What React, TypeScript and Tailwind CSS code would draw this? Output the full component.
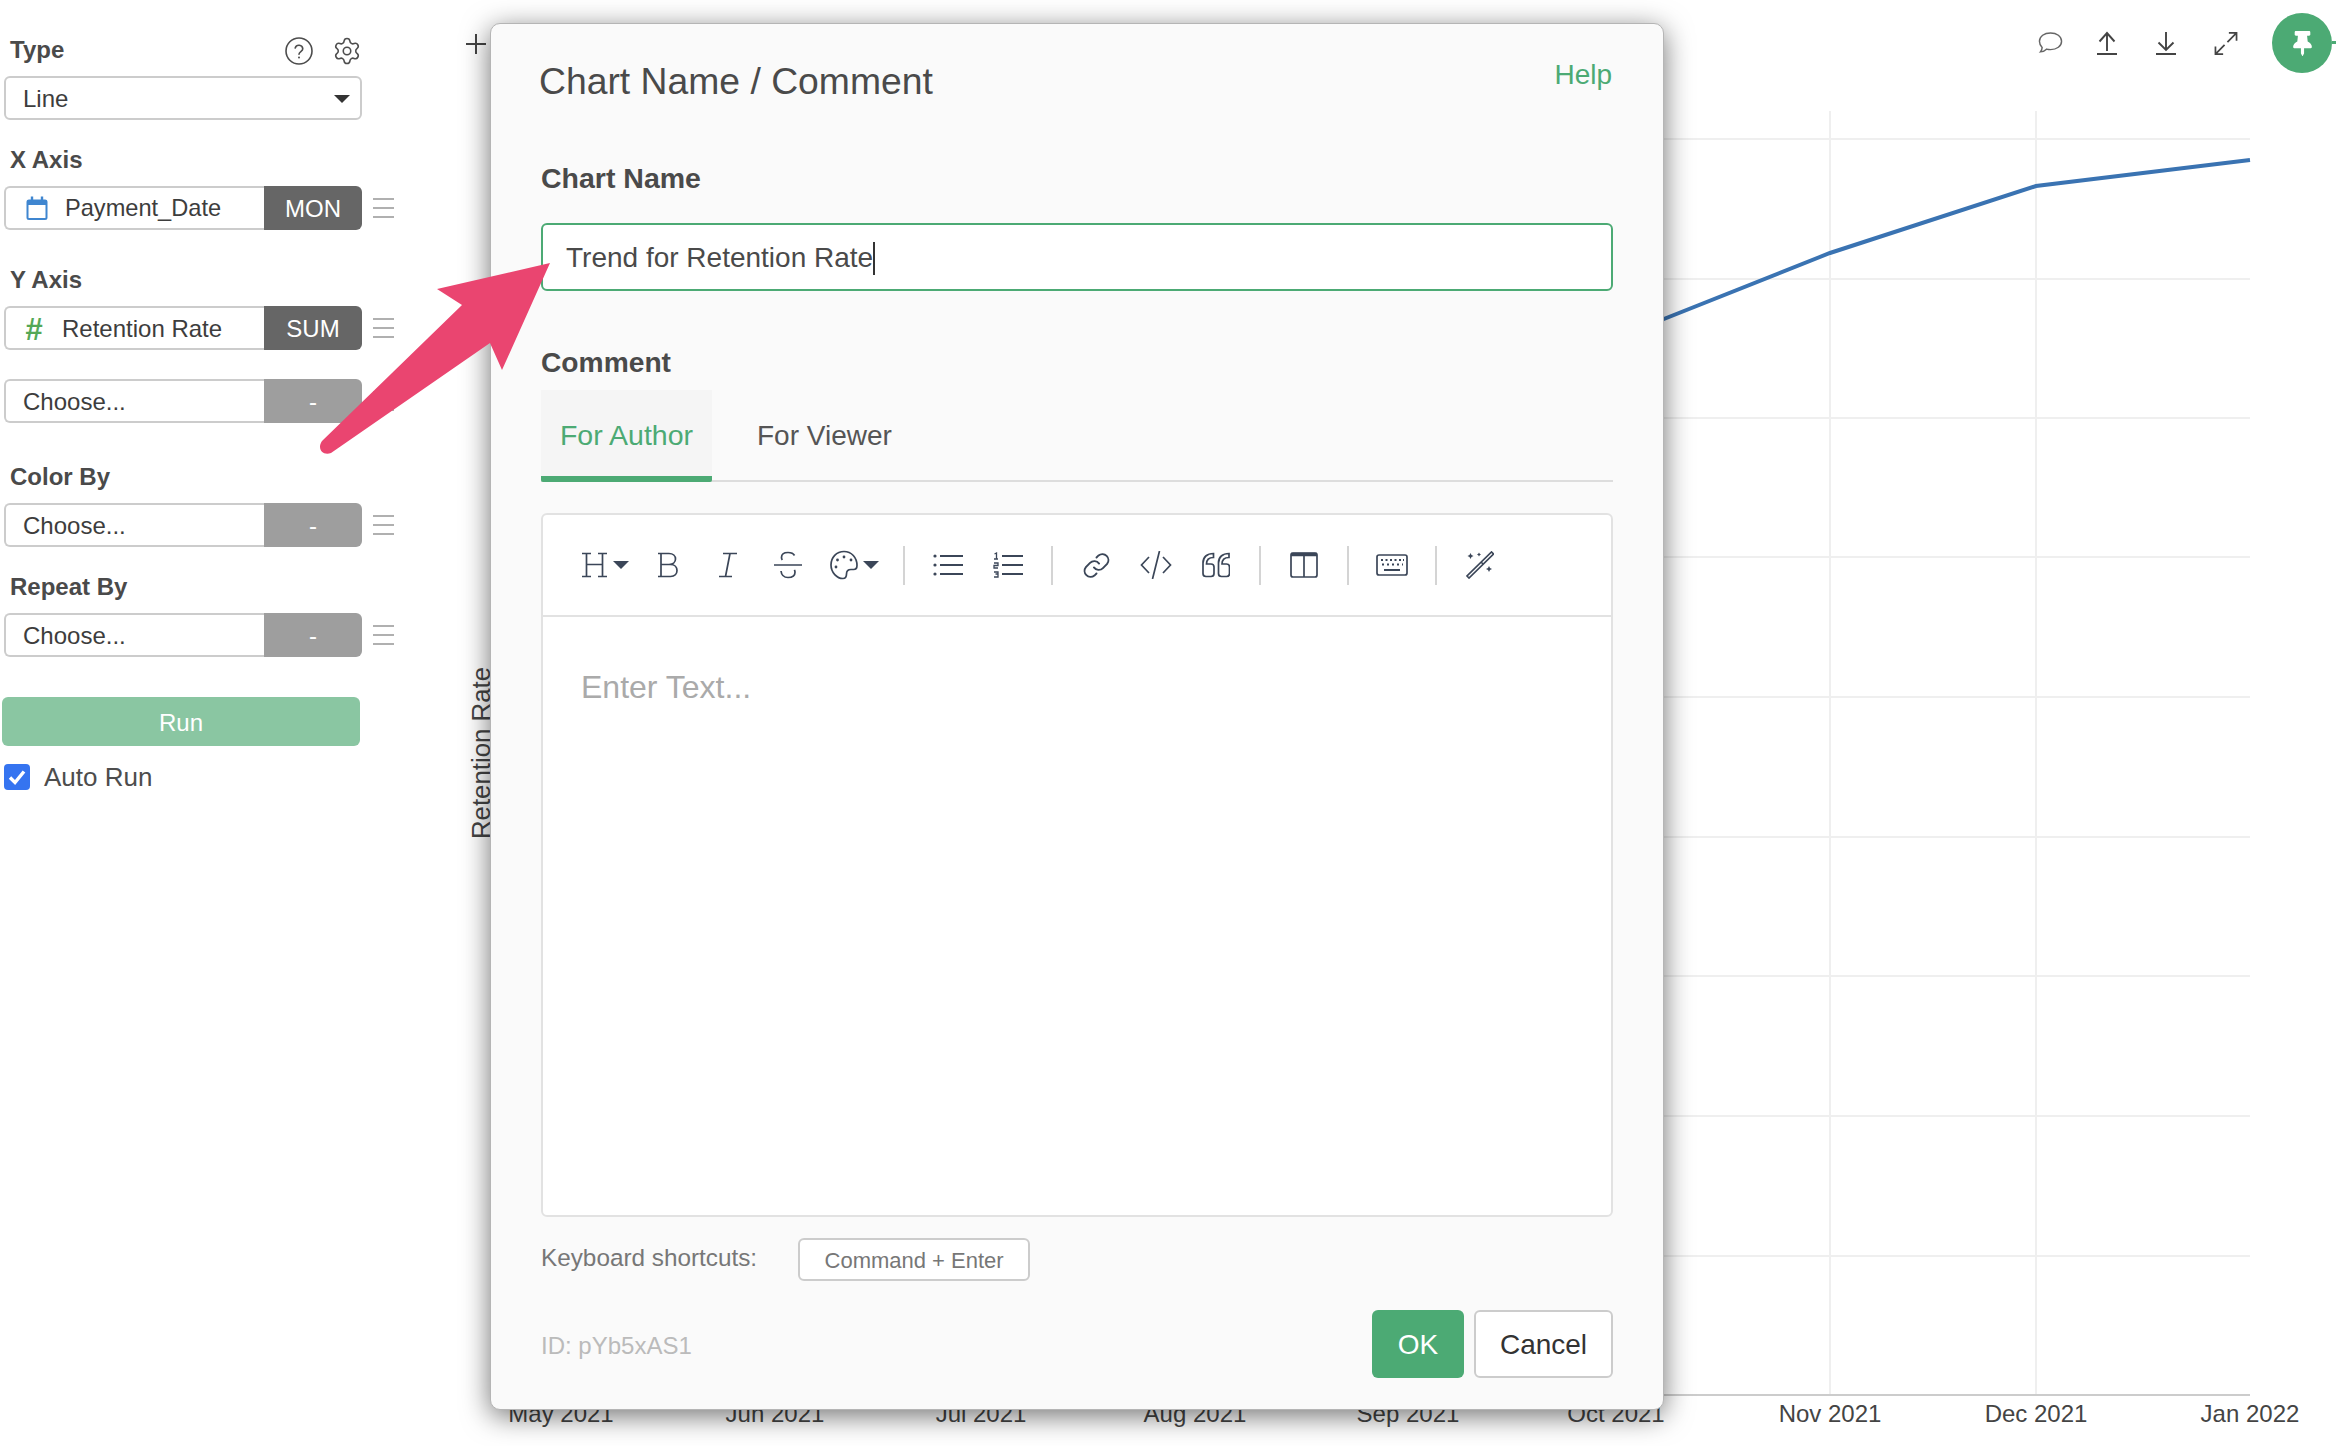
import React from "react";
import { FaThumbtack } from "react-icons/fa";
import { Settings } from "lucide-react";

const FONT = "[font-family:'Liberation_Sans',Arial,sans-serif]";
const ICON = "#3b4658";

function Label({ children, className = "" }: { children: React.ReactNode; className?: string }) {
  return <div className={`ml-[6px] h-[28px] mb-[12px] text-[24px] leading-[28px] font-bold text-[#4a4a4a] ${className}`}>{children}</div>;
}

function Hamburger() {
  return (
    <div className="ml-[11px] w-[21px] flex flex-col gap-[7px]">
      <div className="h-[2px] bg-[#b0b0b0]" />
      <div className="h-[2px] bg-[#b0b0b0]" />
      <div className="h-[2px] bg-[#b0b0b0]" />
    </div>
  );
}

function Field({ children, tag, active }: { children: React.ReactNode; tag: string; active?: boolean }) {
  return (
    <div className="flex items-center">
      <div className="flex w-[358px] h-[44px]">
        <div className="flex-1 flex items-center pt-[2px] border-2 border-r-0 border-[#cccccc] rounded-l-[6px] bg-white text-[24px] text-[#3d3d3d] whitespace-nowrap">
          {children}
        </div>
        <div className={`w-[98px] flex items-center justify-center pt-[2px] rounded-r-[6px] text-[24px] text-white ${active ? "bg-[#666666]" : "bg-[#9e9e9e]"}`}>
          {tag}
        </div>
      </div>
      <Hamburger />
    </div>
  );
}

function Sidebar() {
  return (
    <aside className="w-[470px] shrink-0 pt-[36px] pl-[4px]">
      <div className="flex w-[358px] items-start justify-between">
        <Label>Type</Label>
        <div className="flex items-center gap-[19px]">
          <svg width="28" height="28" viewBox="0 0 28 28" fill="none" stroke="#4d4d4d" strokeWidth="1.6">
            <circle cx="14" cy="14" r="13" />
            <path d="M10.2 11a3.9 3.9 0 0 1 7.6 .8c0 2.6-3.8 3-3.8 5.4" strokeLinecap="round" />
            <circle cx="14" cy="20.6" r="1" fill="#4d4d4d" stroke="none" />
          </svg>
          <Settings size={30} strokeWidth={1.25} color="#4d4d4d" />
        </div>
      </div>
      <div className="flex w-[358px] h-[44px] items-center justify-between border-2 border-[#cccccc] rounded-[6px] bg-white pl-[17px] pr-[10px] pt-[2px] text-[24px] text-[#3d3d3d]">
        <span>Line</span>
        <span className="w-0 h-0 border-x-[8px] border-x-transparent border-t-[8px] border-t-[#333333]" />
      </div>

      <Label className="mt-[26px]">X Axis</Label>
      <Field tag="MON" active>
        <svg className="ml-[20px] mr-[17px] shrink-0 -mt-[2px]" width="22" height="25" viewBox="0 0 22 25" fill="none" stroke="#3f86d0" strokeWidth="2">
          <rect x="1.5" y="4.5" width="19" height="18.5" rx="1.5" />
          <path d="M1.5 6.5h19" strokeWidth="5" />
          <path d="M6 0.5v4M16 0.5v4" strokeWidth="2.4" />
        </svg>
        <span className="text-[23.6px]">Payment_Date</span>
      </Field>

      <Label className="mt-[36px]">Y Axis</Label>
      <Field tag="SUM" active>
        <span className="ml-[19px] mr-[13px] w-[24px] text-[31px] leading-none italic font-bold text-[#54a857]">#</span>
        <span>Retention Rate</span>
      </Field>
      <div className="mt-[29px]">
        <Field tag="-"><span className="ml-[17px]">Choose...</span></Field>
      </div>

      <Label className="mt-[40px]">Color By</Label>
      <Field tag="-"><span className="ml-[17px]">Choose...</span></Field>
      <Label className="mt-[26px]">Repeat By</Label>
      <Field tag="-"><span className="ml-[17px]">Choose...</span></Field>

      <div className="mt-[40px] -ml-[2px] w-[358px] h-[49px] pt-[2px] rounded-[6px] bg-[#8ac6a2] flex items-center justify-center text-[24px] text-white">Run</div>
      <div className="mt-[18px] flex items-center gap-[14px] h-[26px] text-[26px] leading-[28px] text-[#4d4d4d]">
        <div className="w-[26px] h-[26px] rounded-[4px] bg-[#3574f0] flex items-center justify-center">
          <svg width="20" height="20" viewBox="0 0 20 20" fill="none" stroke="#ffffff" strokeWidth="3.4"><path d="M3 10.5l5 5 9-11" /></svg>
        </div>
        <span>Auto Run</span>
      </div>
    </aside>
  );
}

function TopTools() {
  return (
    <div className="h-[90px] shrink-0 flex items-start">
      <svg className="ml-[-4px] mt-[34px]" width="20" height="20" viewBox="0 0 20 20" stroke="#444444" strokeWidth="2"><path d="M10 0v20M0 10h20" /></svg>
      <div className="ml-auto flex items-start pt-[13px]">
        <div className="flex items-center h-[60px]">
          <svg className="mr-[34px]" width="25" height="24" viewBox="0 0 26 24" fill="none" stroke="#666666" strokeWidth="1.5"><path d="M13 1.5c6.5 0 11.5 3.600 11.500 8.700s-5 8.700-11.500 8.700c-1.500 0-2.900-.2-4.200-.5-1.500 1.600-3.600 2.600-6.300 2.800 1-1.200 1.700-2.700 1.800-4.400C2.900 15.300 1.500 13 1.500 10.200 1.500 5.100 6.500 1.500 13 1.500z" /></svg>
          <svg className="mr-[39px]" width="20" height="24" viewBox="0 0 20 24" fill="none" stroke="#444444" strokeWidth="1.900"><path d="M10 20V2M2.500 10.500L10 2l7.500 8.500M0 23h20" /></svg>
          <svg className="mr-[38px]" width="20" height="24" viewBox="0 0 20 24" fill="none" stroke="#444444" strokeWidth="1.900"><path d="M10 1v18M2.500 11.500L10 19l7.500-7.500M0 23h20" /></svg>
          <svg className="mr-[34px]" width="24" height="23" viewBox="0 0 24 24" fill="none" stroke="#444444" strokeWidth="1.800"><path d="M1 23L10.500 13.500M13.500 10.500L23 1M15 1H23V9M1 15V23H9" /></svg>
        </div>
        <div className="relative w-[60px] h-[60px] rounded-full bg-[#4caa74] flex items-center justify-center mr-[4px]">
          <FaThumbtack className="text-white" size={25} />
          <div className="absolute left-[60px] top-[28px] w-[4px] h-[3px] bg-[#4caa74]" />
        </div>
      </div>
    </div>
  );
}

function Chart() {
  const hs = [139, 279, 418, 557, 697, 837, 976, 1116, 1256];
  const vs = [561, 775, 981, 1195, 1408, 1616, 1830, 2036, 2250];
  const ticks = ["May 2021", "Jun 2021", "Jul 2021", "Aug 2021", "Sep 2021", "Oct 2021", "Nov 2021", "Dec 2021", "Jan 2022"];
  return (
    <svg className="block flex-1 w-full" viewBox="470 90 1866 1356" preserveAspectRatio="xMinYMin meet" style={{ fontFamily: "'Liberation Sans', Arial, sans-serif" }}>
      {hs.map((y) => <line key={y} x1="500" x2="2250" y1={y} y2={y} stroke="#efefef" strokeWidth="2" />)}
      {vs.slice(0, 8).map((x) => <line key={x} x1={x} x2={x} y1="111" y2="1395" stroke="#efefef" strokeWidth="2" />)}
      <line x1="500" x2="2250" y1="1395" y2="1395" stroke="#cccccc" strokeWidth="2" />
      <polyline points="1408,420 1616,338 1830,253 2036,186 2250,160" fill="none" stroke="#3a73b2" strokeWidth="4" />
      {ticks.map((t, i) => <text key={t} x={vs[i]} y="1422" textAnchor="middle" fontSize="24" fill="#444444">{t}</text>)}
      <text transform="translate(490 753) rotate(-90)" textAnchor="middle" fontSize="25.8" fill="#444444">Retention Rate</text>
    </svg>
  );
}

function Sep() {
  return <div className="w-[2px] h-[39px] bg-[#d4d4d4] mx-[13px] shrink-0" />;
}

function Btn({ children, w = "w-[60px]" }: { children: React.ReactNode; w?: string }) {
  return <div className={`${w} h-[40px] flex items-center justify-center shrink-0`}>{children}</div>;
}

function Caret() {
  return <span className="ml-[5px] w-0 h-0 border-x-[8px] border-x-transparent border-t-[8px] border-t-[#3b4658]" />;
}

const S = { fill: "none", stroke: ICON, strokeWidth: 1.7 } as const;

function Toolbar() {
  return (
    <div className="h-[102px] shrink-0 flex items-center pl-[29px] border-b-2 border-[#e2e2e2]">
      <Btn w="w-[66px]">
        <svg width="26" height="26" viewBox="0 0 26 26" {...S}><path d="M0 1.500h9M4.500 1.500v23M0 24.500h9M16 1.500h9M20.500 1.500v23M16 24.500h9M4.500 12.500h16" /></svg>
        <Caret />
      </Btn>
      <Btn><svg width="20" height="26" viewBox="0 0 20 26" {...S}><path d="M0 1.500h11c4 0 6.500 2.500 6.500 5.500s-2.500 5.500-6.500 5.500H3M3 1.500v23M3 12.500h9.500c4.300 0 6.500 2.700 6.500 6s-2.200 6-6.500 6H0" /></svg></Btn>
      <Btn><svg width="18" height="26" viewBox="0 0 18 26" {...S}><path d="M4 1.500h14M0 24.500h13M11 1.500L6.500 24.500" /></svg></Btn>
      <Btn><svg width="28" height="28" viewBox="0 0 28 28" {...S}><path d="M0 14h28M20.500 4.500C19.500 2.500 17.500 1.500 14 1.500c-4 0-6.500 1.700-6.500 5 0 1 .3 1.800 .8 2.500M7 20c.5 4.200 3 6.500 7 6.500 4.200 0 7-2 7-5.300 0-1-.2-1.700-.6-2.400" /></svg></Btn>
      <Btn w="w-[72px]">
        <svg width="28" height="30" viewBox="0 0 28 30" {...S}>
          <path d="M14 1.500C6.500 1.500 1 7.500 1 15s6 13.500 12 13.500c3 0 3.500-2 3.500-4.500 0-3 1.500-4.500 4.500-4.500h2.500c2.500 0 3.500-1.500 3.500-4C27 7.500 21.500 1.500 14 1.500z" />
          <circle cx="14" cy="7" r="1.400" fill={ICON} stroke="none" /><circle cx="21" cy="10" r="1.400" fill={ICON} stroke="none" />
          <circle cx="7.500" cy="10" r="1.400" fill={ICON} stroke="none" /><circle cx="6" cy="17" r="1.400" fill={ICON} stroke="none" />
        </svg>
        <Caret />
      </Btn>
      <Sep />
      <Btn><svg width="30" height="26" viewBox="0 0 30 26" {...S} strokeWidth="1.800"><circle cx="2" cy="4" r="1.600" fill={ICON} stroke="none" /><circle cx="2" cy="13" r="1.600" fill={ICON} stroke="none" /><circle cx="2" cy="22" r="1.600" fill={ICON} stroke="none" /><path d="M7 4h23M7 13h23M7 22h23" /></svg></Btn>
      <Btn><svg width="30" height="26" viewBox="0 0 30 26" {...S} strokeWidth="1.800"><path d="M9 4h21M9 13h21M9 22h21" /><path d="M1.500 2l2-1v6M1 7h4M1 11h4v2.500H1V16h4M1 20h4v2H2.500h2.500v3H1" strokeWidth="1.300" /></svg></Btn>
      <Sep />
      <Btn><svg width="31" height="31" viewBox="0 0 24 24" {...S} strokeWidth="1.500" strokeLinecap="round"><path d="M10 13.500a4.600 4.600 0 0 0 7 .5l3.200-3.200a4.700 4.700 0 0 0-6.600-6.600L12 5.800" /><path d="M14 10.500a4.600 4.600 0 0 0-7-.5l-3.200 3.200a4.700 4.700 0 0 0 6.600 6.600L12 18.200" /></svg></Btn>
      <Btn><svg width="32" height="28" viewBox="0 0 32 28" {...S}><path d="M9 6L1.500 14 9 22M23 6l7.500 8L23 22M19.500 0L12.500 28" /></svg></Btn>
      <Btn><svg width="28" height="26" viewBox="0 0 28 26" {...S}><path d="M11.500 1.500C5 1.500 1 5 1 11v10.500c0 2 1 3 3 3h5c2 0 3-1 3-3V15c0-2-1-3-3-3H4.500c0-4 2.500-6.500 7-6.500zM27 1.500c-6.500 0-10.500 3.500-10.500 9.500v10.500c0 2 1 3 3 3h5c2 0 3-1 3-3V15c0-2-1-3-3-3H20c0-4 2.500-6.500 7-6.500z" /></svg></Btn>
      <Sep />
      <Btn><svg width="28" height="26" viewBox="0 0 28 26" {...S}><rect x="1" y="1" width="26" height="24" rx="2" /><path d="M1 2.500h26" strokeWidth="3.500" /><path d="M14 2v23" /></svg></Btn>
      <Sep />
      <Btn><svg width="32" height="22" viewBox="0 0 32 22" {...S}><rect x="1" y="1" width="30" height="20" rx="2" /><path d="M5 6h2M9.500 6h2M14 6h2M18.500 6h2M23 6h2M27 6h1M6 10.500h2M11 10.500h2M16 10.500h2M21 10.500h2M26 10.500h1" strokeWidth="1.800" /><path d="M8 16h16" strokeWidth="2" /></svg></Btn>
      <Sep />
      <Btn><svg width="28" height="28" viewBox="0 0 28 28" {...S}><path d="M1 25l2 2L27.500 3 25.500 1zM15 11l2 2" /><path d="M4.500 2l1 2 2 1-2 1-1 2-1-2-2-1 2-1zM13 1.500l.7 1.300 1.300.7-1.300.7-.7 1.300-.7-1.300-1.300-.7 1.300-.7zM23 15l1 2 2 1-2 1-1 2-1-2-2-1 2-1z" fill={ICON} stroke="none" /></svg></Btn>
    </div>
  );
}

function Dialog() {
  return (
    <section className="absolute left-[490px] top-[23px] w-[1174px] h-[1387px] box-border rounded-[10px] border border-[#b5b5b5] bg-[#fafafa] shadow-[0_6px_28px_rgba(0,0,0,0.55)] px-[50px] pt-[34px] flex flex-col">
      <div className="flex items-start justify-between h-[44px]">
        <h2 className="-ml-[2px] text-[37.3px] leading-[46px] text-[#4a4a4a]">Chart Name / Comment</h2>
        <a className="mr-[1px] text-[28px] leading-[34px] text-[#4caa74]">Help</a>
      </div>
      <div className="mt-[59px] h-[32px] text-[28.5px] leading-[34px] font-bold text-[#4a4a4a]">Chart Name</div>
      <div className="mt-[30px] h-[68px] flex items-center rounded-[6px] border-2 border-[#4caa74] bg-white pl-[23px] pt-[2px] text-[28px] text-[#4a4a4a]">
        <span>Trend for Retention Rate</span>
        <span className="w-[2px] h-[33px] bg-[#333333]" />
      </div>
      <div className="mt-[54px] h-[32px] text-[28.2px] leading-[34px] font-bold text-[#4a4a4a]">Comment</div>
      <div className="mt-[13px] h-[92px] flex border-b-2 border-[#dddddd]">
        <div className="w-[171px] h-[92px] bg-[#f5f5f5] border-b-[6px] border-[#4caa74] rounded-b-[2px] flex items-center justify-center text-[28.5px] text-[#4caa74] pt-[4px]">For Author</div>
        <div className="ml-[45px] flex items-center text-[28px] text-[#555555] pt-[2px]">For Viewer</div>
      </div>
      <div className="mt-[31px] h-[704px] rounded-[6px] border-2 border-[#e2e2e2] bg-white flex flex-col">
        <Toolbar />
        <div className="pl-[38px] pt-[50px] text-[32px] leading-[40px] text-[#aaaaaa]">Enter Text...</div>
      </div>
      <div className="mt-[21px] flex items-start">
        <span className="text-[24.3px] leading-[40px] text-[#777777]">Keyboard shortcuts:</span>
        <div className="ml-[41px] w-[232px] h-[43px] pt-[2px] flex items-center justify-center rounded-[6px] border-2 border-[#cccccc] bg-white text-[22px] text-[#777777]">Command + Enter</div>
      </div>
      <div className="mt-[29px] flex items-center">
        <span className="pt-[3px] text-[24px] text-[#bbbbbb]">ID: pYb5xAS1</span>
        <div className="ml-auto w-[92px] h-[68px] pt-[2px] flex items-center justify-center rounded-[6px] bg-[#4caa74] text-[28px] text-white">OK</div>
        <div className="ml-[10px] w-[139px] h-[68px] pt-[2px] flex items-center justify-center rounded-[6px] border-2 border-[#cccccc] bg-white text-[28px] text-[#333333]">Cancel</div>
      </div>
    </section>
  );
}

export default function App() {
  return (
    <div className={`relative flex w-[2336px] h-[1446px] overflow-hidden bg-white ${FONT}`}>
      <Sidebar />
      <main className="flex-1 flex flex-col min-w-0">
        <TopTools />
        <Chart />
      </main>
      <Dialog />
      <svg className="absolute left-0 top-0 pointer-events-none" width="700" height="500" viewBox="0 0 700 500">
        <path d="M550 263L437 289L462 305L322 441C317 448 322 456 331 453L490 343L502 370Z" fill="#ea4570" />
      </svg>
    </div>
  );
}
